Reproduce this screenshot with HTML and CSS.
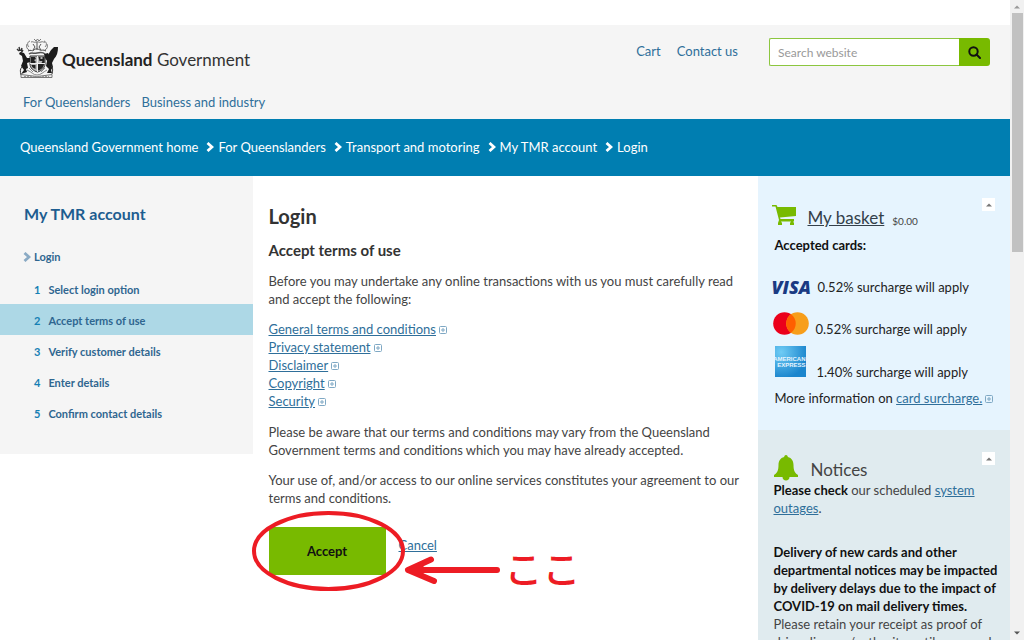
FILE: index.html
```html
<!DOCTYPE html>
<html lang="en">
<head>
    <meta charset="UTF-8">
    <meta name="viewport" content="width=device-width, initial-scale=1.0">
    <title>Login | My TMR account | Queensland Government</title>
    <link rel="stylesheet" href="styles.css">
</head>
<body>

    <!-- Shared icons -->
    <svg class="symbols" aria-hidden="true">
        <symbol id="chevron" viewBox="0 0 8 10">
            <path d="M1.500 1 L6 5 L1.500 9" fill="none" stroke="currentColor" stroke-width="2.800"/>
        </symbol>
        <symbol id="expand" viewBox="0 0 8 8">
            <rect x="0.500" y="0.500" width="7" height="7" rx="1" fill="none" stroke="currentColor"/>
            <path d="M4 2v4M2 4h4" stroke="currentColor"/>
        </symbol>
        <symbol id="up" viewBox="0 0 6 4">
            <path d="M0 3.500 L3 0.500 L6 3.500z" fill="currentColor"/>
        </symbol>
    </svg>

    <div class="window">
        <div class="page">

            <!-- Header -->
            <header class="header">
                <div class="header-top">
                    <a class="logo" href="#">
                        <svg class="crest" viewBox="0 0 42 41" aria-hidden="true">
                            <!-- crest and mantling -->
                            <g fill="none" stroke="#777" stroke-width="1">
                                <path d="M18 1l2 2 1.500-2L23 3l2-2M15 4c2-1 3 1 5 0s3 1 5 0 3 1 4 0"/>
                                <path d="M14 3c-3 1-3 4-1 6M28 3c3 1 3 4 1 6M11 6c-1 3 0 5 2 6M31 6c1 3 0 5-2 6"/>
                                <path d="M17 6l2 3-2 3M25 6l-2 3 2 3M21 4v8" stroke="#555"/>
                                <path d="M12 13c3-2 4 1 6-1s4-1 6 0 3-1 6 1" stroke="#444"/>
                                <path d="M13 16c3-2 4 0 8-1s6-1 8 1" stroke="#555" stroke-width="1.500"/>
                            </g>
                            <!-- shield -->
                            <path d="M14 18h15v8c0 4-4 7-7.500 8-4-1-7.500-4-7.500-8z" fill="#bbb" stroke="#333"/>
                            <g fill="#222">
                                <path d="M15 19h4l1 2-2 1 2 2-1 1h-4zM22.500 19h2v2h2v-2h2v6h-3l1-2h-3z"/>
                                <path d="M15.500 27h4v4c-2-1-4-2-4-4zM22 26h6c0 3-3 6-6 6.500z"/>
                            </g>
                            <path d="M21.500 18v16M14 25.500h15" stroke="#eee" fill="none"/>
                            <!-- supporters -->
                            <g fill="#1c1c1c">
                                <path d="M4 14l4 1 3 5 3 0v4l-3 1 1 5-2 1 1 3-6 2 3-4-3-4 2-5-1-5-3-2z"/>
                                <path d="M42 9c0 5-1 9-4 12l-2 4 1 4-2 3 1 3-5 0 2-4-3-3 1-5-2-4 3-2 3-5 3-3z"/>
                                <path d="M28 16l4-1 2 4-4 3z"/>
                            </g>
                            <g fill="none" stroke="#333">
                                <path d="M1 11l2 2M3 9l1 4M6 10l-1 3M7 12l-2 3" stroke-width="1.400"/>
                                <path d="M6 29c-2 2-2 4-1 8M35 28c2 1 2 4 1 8"/>
                                <path d="M11 32c5 2 6 5 10 5s6-3 10-5M13 30l4 4M29 30l-4 4" stroke="#888"/>
                            </g>
                            <!-- scroll -->
                            <path d="M5 36.500l8 1 8 1 8-1 7-1v3H5z" fill="#eee" stroke="#777"/>
                            <path d="M8 38.500h25" stroke="#999" stroke-dasharray="2 1"/>
                        </svg>
                        <span class="logo-text"><b>Queensland</b> Government</span>
                    </a>
                    <nav class="tools">
                        <a href="#">Cart</a>
                        <a href="#">Contact us</a>
                    </nav>
                    <form class="search">
                        <input type="text" placeholder="Search website" aria-label="Search website">
                        <button type="submit" aria-label="Search">
                            <svg width="13" height="13" viewBox="0 0 13 13" fill="none" stroke="#111" stroke-width="2">
                                <circle cx="5.500" cy="5.500" r="4.200"/>
                                <path d="M8.500 8.500l3.500 3.500" stroke-linecap="round"/>
                            </svg>
                        </button>
                    </form>
                </div>
                <nav class="site-nav">
                    <a href="#">For Queenslanders</a>
                    <a href="#">Business and industry</a>
                </nav>
            </header>

            <!-- Breadcrumbs -->
            <nav class="breadcrumbs">
                <a href="#">Queensland Government home</a>
                <a href="#"><svg class="chevron"><use href="#chevron"/></svg>For Queenslanders</a>
                <a href="#"><svg class="chevron"><use href="#chevron"/></svg>Transport and motoring</a>
                <a href="#"><svg class="chevron"><use href="#chevron"/></svg>My TMR account</a>
                <a href="#"><svg class="chevron"><use href="#chevron"/></svg>Login</a>
            </nav>

            <div class="columns">

                <!-- Steps -->
                <nav class="sidebar">
                    <h2><a href="#">My TMR account</a></h2>
                    <a class="section" href="#"><svg class="chevron"><use href="#chevron"/></svg>Login</a>
                    <ol class="steps">
                        <li><span class="number">1</span>Select login option</li>
                        <li class="current"><span class="number">2</span>Accept terms of use</li>
                        <li><span class="number">3</span>Verify customer details</li>
                        <li><span class="number">4</span>Enter details</li>
                        <li><span class="number">5</span>Confirm contact details</li>
                    </ol>
                </nav>

                <!-- Content -->
                <main class="content">
                    <h1>Login</h1>
                    <h2>Accept terms of use</h2>
                    <p>Before you may undertake any online transactions with us you must carefully read and accept the following:</p>
                    <ul class="links">
                        <li><a href="#">General terms and conditions</a><svg class="expand"><use href="#expand"/></svg></li>
                        <li><a href="#">Privacy statement</a><svg class="expand"><use href="#expand"/></svg></li>
                        <li><a href="#">Disclaimer</a><svg class="expand"><use href="#expand"/></svg></li>
                        <li><a href="#">Copyright</a><svg class="expand"><use href="#expand"/></svg></li>
                        <li><a href="#">Security</a><svg class="expand"><use href="#expand"/></svg></li>
                    </ul>
                    <p>Please be aware that our terms and conditions may vary from the Queensland Government terms and conditions which you may have already accepted.</p>
                    <p>Your use of, and/or access to our online services constitutes your agreement to our terms and conditions.</p>
                    <form class="actions">
                        <button type="submit">Accept</button>
                        <a href="#">Cancel</a>
                        <div class="callout">
                            <svg width="250" height="82" viewBox="0 0 250 82" fill="none" stroke="#ed1c24">
                                <ellipse cx="76.500" cy="40" rx="74.500" ry="38" stroke-width="4"/>
                                <path d="M245 59H158" stroke-width="6" stroke-linecap="round"/>
                                <path d="M179 48.500L156 59L182 70" stroke-width="6" stroke-linecap="round" stroke-linejoin="round"/>
                                <path d="M155 59l16-7v14z" fill="#ed1c24"/>
                            </svg>
                            <span class="callout-text" lang="ja">ここ</span>
                        </div>
                    </form>
                </main>

                <!-- Right column -->
                <aside class="aside">
                    <section class="basket">
                        <button class="toggle" type="button" aria-label="Collapse basket"><svg width="6" height="4"><use href="#up"/></svg></button>
                        <h2>
                            <svg width="24" height="21" viewBox="0 0 24 21" fill="#78ba00" aria-hidden="true">
                                <path d="M0 0h4.500l1 2H24v9L8 12.500l.5 1.500H22v2.500h-1l1 1.500v2h-4v-2l1-1.500H9l1 1.500v2H6v-2l1-3L3.500 1.500H0z"/>
                            </svg>
                            <a href="#">My basket</a>
                            <small>$0.00</small>
                        </h2>
                        <h3>Accepted cards:</h3>
                        <ul class="cards">
                            <li>
                                <span class="visa">VISA</span>
                                0.52% surcharge will apply
                            </li>
                            <li>
                                <svg class="mastercard" viewBox="0 0 36 23" role="img" aria-label="Mastercard">
                                    <circle cx="11.500" cy="11.500" r="11.300" fill="#eb001b"/>
                                    <circle cx="24.500" cy="11.500" r="11.300" fill="#f79e1b"/>
                                    <path d="M18 2.300a11.300 11.300 0 0 1 0 18.400a11.300 11.300 0 0 1 0-18.400z" fill="#ff5f00"/>
                                </svg>
                                0.52% surcharge will apply
                            </li>
                            <li>
                                <span class="amex"><span>AMERICAN</span><span>EXPRESS</span></span>
                                1.40% surcharge will apply
                            </li>
                        </ul>
                        <p>More information on <a href="#">card surcharge.</a><svg class="expand"><use href="#expand"/></svg></p>
                    </section>

                    <section class="notices">
                        <button class="toggle" type="button" aria-label="Collapse notices"><svg width="6" height="4"><use href="#up"/></svg></button>
                        <h2>
                            <svg width="24" height="26" viewBox="0 0 24 26" fill="#78ba00" aria-hidden="true">
                                <path d="M12 0c1.300 0 1.800 1 1.800 2 4 1 5.700 4 5.700 8 0 6 1.500 8 4.500 10v2H0v-2c3-2 4.500-4 4.500-10 0-4 1.700-7 5.700-8 0-1 .5-2 1.800-2z"/>
                                <path d="M8.500 22h7c0 2-1.500 3.500-3.500 3.500S8.500 24 8.500 22z"/>
                            </svg>
                            Notices
                        </h2>
                        <p><b>Please check</b> our scheduled <a href="#">system outages</a>.</p>
                        <p class="delivery"><b>Delivery of new cards and other departmental notices may be impacted by delivery delays due to the impact of COVID-19 on mail delivery times.</b><br>
                        Please retain your receipt as proof of driver licence/authority until your card arrives.</p>
                    </section>
                </aside>

            </div>
        </div>

        <div class="scrollbar" aria-hidden="true">
            <svg width="6" height="4"><use href="#up"/></svg>
            <div class="thumb"></div>
            <svg class="down" width="6" height="4"><use href="#up"/></svg>
        </div>
    </div>

</body>
</html>
```
FILE: styles.css
```css
* {
    box-sizing: border-box;
}

body {
    margin: 0;
    font-family: Lato, "Liberation Sans", sans-serif;
    font-size: 13px;
    line-height: 18px;
    color: #444;
    background: #fff;
}

h1, h2, h3, p, ul, ol {
    margin: 0;
    padding: 0;
    list-style: none;
}

a {
    color: #2f6f9a;
}

button {
    font-family: inherit;
    border: none;
    cursor: pointer;
}

.symbols {
    display: none;
}

.chevron {
    width: 8px;
    height: 10px;
}

.expand {
    width: 8px;
    height: 8px;
    margin-left: 3px;
    color: #7fa8c4;
}

.window {
    display: flex;
    height: 100vh;
    overflow: hidden;
}

.page {
    flex: 1;
    padding-top: 25px;
}

/* Header */
.header {
    background: #f5f5f5;
    padding: 13px 20px 8px 16px;
}

.header-top {
    display: flex;
    align-items: flex-start;
}

.logo {
    display: flex;
    align-items: center;
    gap: 4px;
    margin-right: auto;
    color: #333;
    text-decoration: none;
}

.crest {
    width: 42px;
    height: 41px;
}

.logo-text {
    font-size: 17px;
    line-height: 24px;
    padding-top: 2px;
}

.logo-text b {
    color: #222;
}

.tools {
    display: flex;
    gap: 16px;
    padding-top: 4px;
    margin-right: 31px;
}

.tools a, .site-nav a {
    text-decoration: none;
}

.search {
    display: flex;
    width: 221px;
    height: 28px;
}

.search input {
    flex: 1;
    min-width: 0;
    padding: 0 8px;
    border: 1px solid #8cc63f;
    border-right: none;
    border-radius: 2px 0 0 2px;
    font-family: inherit;
    font-size: 12px;
}

.search input::placeholder {
    color: #999;
}

.search button {
    display: flex;
    align-items: center;
    justify-content: center;
    width: 31px;
    padding: 0;
    background: #78ba00;
    border-radius: 0 3px 3px 0;
}

.site-nav {
    display: flex;
    gap: 11px;
    padding: 14px 7px 0;
}

/* Breadcrumbs */
.breadcrumbs {
    display: flex;
    gap: 8px;
    padding: 19px 20px 20px;
    background: #007eb1;
}

.breadcrumbs a {
    display: flex;
    align-items: center;
    gap: 4px;
    color: #fff;
    text-decoration: none;
}

.columns {
    display: grid;
    grid-template-columns: 1fr 2fr 1fr;
    align-items: start;
}

/* Steps */
.sidebar {
    background: #f5f5f5;
    padding: 28px 0 26px;
    font-size: 11px;
    font-weight: bold;
    color: #2f6690;
}

.sidebar h2 {
    padding: 0 24px;
    font-size: 16px;
    line-height: 20px;
}

.sidebar a {
    color: #1d5d90;
    text-decoration: none;
}

.sidebar .section {
    display: flex;
    align-items: center;
    gap: 3px;
    padding: 24px 23px 7px;
    color: #2f6690;
}

.section .chevron {
    color: #8aaac4;
}

.steps li {
    display: flex;
    gap: 8px;
    padding: 8px 34px 5px;
}

.steps .current {
    background: #add8e6;
}

.number {
    color: #1580b4;
}

/* Content */
.content {
    padding: 28px 16px 0;
}

.content h1 {
    font-size: 20px;
    line-height: 24px;
    color: #333;
}

.content h2 {
    margin: 13px 0;
    font-size: 15px;
    line-height: 18px;
    color: #333;
}

.content p {
    margin-bottom: 12px;
}

.links {
    margin-bottom: 13px;
}

.actions {
    position: relative;
    display: flex;
    gap: 13px;
    padding-top: 8px;
}

.actions button {
    width: 117px;
    height: 48px;
    background: #78ba00;
    color: #111;
    font-size: 13px;
    font-weight: bold;
}

.actions a {
    padding-top: 9px;
}

/* Red marker drawn over the buttons */
.callout {
    position: absolute;
    left: -17px;
    top: -8px;
    display: flex;
    align-items: flex-end;
    gap: 3px;
    color: #ed1c24;
    pointer-events: none;
}

.callout-text {
    font-family: "Noto Sans CJK JP", sans-serif;
    font-size: 38px;
    line-height: 52px;
    font-weight: 500;
}

/* Right column */
.basket {
    position: relative;
    padding: 29px 8px 23px 17px;
    background: #e6f4fe;
    color: #222;
}

.notices {
    position: relative;
    min-height: 260px;
    padding: 25px 8px 22px 16px;
    background: #e0ebef;
}

.basket h2, .notices h2 {
    display: flex;
    align-items: flex-start;
    font-size: 17px;
    line-height: 26px;
    font-weight: normal;
    color: #444;
}

.basket h2 {
    gap: 12px;
    margin-left: -3px;
}

.basket h2 a {
    color: #333f4a;
}

.basket h2 small {
    margin-left: -4px;
    padding-top: 3px;
    font-size: 10px;
}

.basket h3 {
    margin: 2px 0 24px;
    font-size: 13px;
    line-height: 18px;
}

.basket h3, .notices b {
    color: #111;
}

.cards {
    margin-left: -2px;
}

.cards li {
    display: flex;
    align-items: flex-end;
    gap: 7px;
    margin-bottom: 8px;
}

.visa {
    width: 39px;
    margin-left: -1px;
    color: #1a3a83;
    font-family: "Open Sans", sans-serif;
    font-size: 18px;
    font-style: italic;
    font-weight: 800;
}

.mastercard {
    width: 36px;
    height: 23px;
    margin: 8px 0 3px;
}

.amex {
    display: flex;
    flex-direction: column;
    align-items: flex-end;
    width: 31px;
    height: 31px;
    margin: 0 4px 4px 2px;
    padding-top: 10px;
    background: radial-gradient(circle at 20% 20%, #6fccf5, #1b85cd 75%);
    color: #e6f4fe;
    font-family: "Liberation Sans", sans-serif;
    font-size: 6px;
    font-weight: bold;
    line-height: 6px;
}

.toggle {
    position: absolute;
    top: 22px;
    right: 15px;
    display: flex;
    align-items: center;
    justify-content: center;
    width: 13px;
    height: 13px;
    padding: 0;
    background: #fff;
    color: #777;
}

.notices h2 {
    gap: 13px;
    line-height: 30px;
    margin-bottom: -4px;
}

.delivery {
    margin-top: 26px;
}

/* Scrollbar */
.scrollbar {
    display: flex;
    flex-direction: column;
    align-items: center;
    width: 14px;
    padding: 5px 0;
    background: #f1f1f1;
    color: #999;
}

.thumb {
    width: 11px;
    height: 239px;
    margin: 4px 0 auto;
    background: #c1c1c1;
}

.down {
    transform: rotate(180deg);
    color: #555;
}
```
